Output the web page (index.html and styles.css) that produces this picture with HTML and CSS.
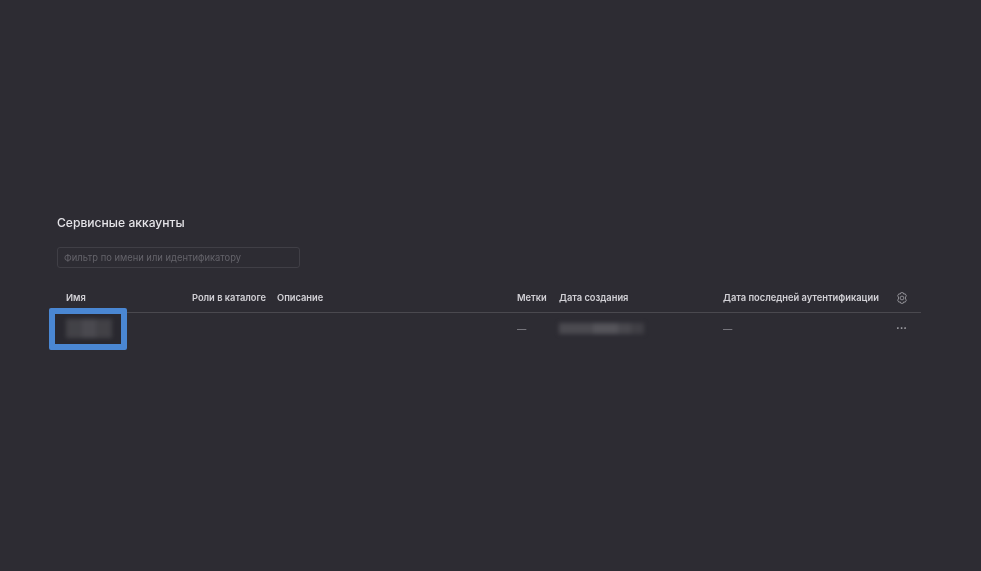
FILE: index.html
```html
<!DOCTYPE html>
<html lang="ru">
<head>
<meta charset="utf-8">
<title>Сервисные аккаунты</title>
<link rel="stylesheet" href="styles.css">
</head>
<body>
<main class="page">
  <h1 class="title">Сервисные аккаунты</h1>
  <div class="filter">Фильтр по имени или идентификатору</div>
  <div class="table">
    <div class="row head">
      <span class="name">Имя</span>
      <span>Роли в каталоге</span>
      <span>Описание</span>
      <span>Метки</span>
      <span>Дата создания</span>
      <span>Дата последней аутентификации</span>
      <svg class="gear" viewBox="0 0 12 12" width="12" height="12" aria-hidden="true">
        <path d="M4.8.7H7.2L7.7 2.1 9.2 1.8 10.4 3.9 9.5 5V7L10.4 8.1 9.2 10.2 7.7 9.9 7.2 11.3H4.8L4.3 9.9 2.8 10.2 1.6 8.1 2.5 7V5L1.6 3.9 2.8 1.8 4.3 2.1Z" fill="none" stroke="#8d8c92" stroke-width="1" stroke-linejoin="round"/>
        <circle cx="6" cy="6" r="1.9" fill="none" stroke="#8d8c92" stroke-width="1"/>
      </svg>
    </div>
    <div class="row body">
      <span class="name"><span class="blur blur-name"></span></span>
      <span></span>
      <span></span>
      <span class="dash">—</span>
      <span><span class="blur blur-date"></span></span>
      <span class="dash">—</span>
      <span class="more">···</span>
    </div>
    <div class="mark"></div>
  </div>
</main>
</body>
</html>
```

FILE: styles.css
```css
* { box-sizing: border-box; }
html, body { margin: 0; height: 100%; }
body {
  background: #2d2c33;
  color: #dddce0;
  font-family: "Inter", "Noto Sans", sans-serif;
  overflow: hidden;
}
.page { padding: 214px 60px 0 57px; filter: blur(0.3px); }
.title {
  margin: 0;
  font-size: 12.1px;
  line-height: 17px;
  font-weight: 500;
  color: #e4e3e7;
}
.filter {
  margin-top: 16px;
  width: 243px;
  height: 21px;
  padding-left: 6px;
  border: 1px solid #403f46;
  border-radius: 3px;
  font-size: 9.4px;
  line-height: 19px;
  color: #64636a;
}
.table { position: relative; margin-top: 20px; }
.row {
  display: grid;
  grid-template-columns: 126px 85px 240px 42px 164px 173px 1fr;
  padding-left: 9px;
  font-size: 9.3px;
  align-items: center;
}
.head {
  height: 25px;
  padding-bottom: 4px;
  font-weight: 600;
  color: #d2d1d6;
  border-bottom: 1px solid #4a494f;
}
.head span { line-height: 16px; white-space: nowrap; }
.gear { display: block; }
.body { height: 34px; padding-bottom: 4px; }
.dash { color: #8b8a90; }
.more { color: #a5a4aa; font-weight: 700; font-size: 11px; }
.blur { display: block; filter: blur(2px); }
.blur-name {
  width: 46px;
  height: 19px;
  background: linear-gradient(90deg, #48474d 0 35%, #504f55 35% 65%, #47464c 65%);
}
.blur-date {
  width: 85px;
  height: 11px;
  background: linear-gradient(90deg, #4b4a50 0 40%, #55545a 40% 70%, #49484e 70% 85%, #403f45 85%);
}
.mark {
  position: absolute;
  left: -8px;
  top: 20px;
  width: 78px;
  height: 42px;
  border: 6px solid #4a87d3;
  border-radius: 2px;
  background: rgba(0, 0, 0, 0.07);
}
```
